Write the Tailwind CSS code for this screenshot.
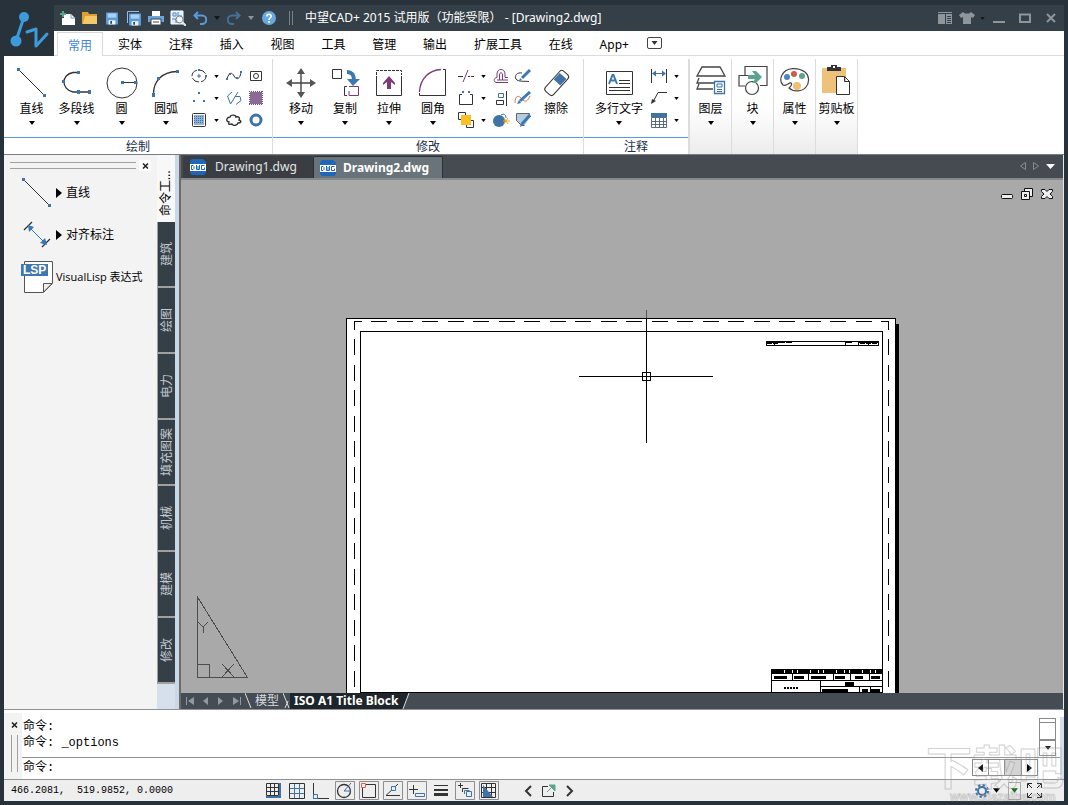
<!DOCTYPE html>
<html lang="zh-CN">
  <head>
    <meta charset="UTF-8" />
    <meta name="viewport" content="width=device-width, initial-scale=1.0" />
    <title>中望CAD+ 2015</title>
    <script src="https://cdn.jsdelivr.net/npm/@tailwindcss/browser@4"></script>
  </head>
  <body class="flex h-screen flex-col overflow-hidden bg-[#28323a] px-1 pt-[5px] pb-1 font-['Noto_Sans','Noto_Sans_CJK_SC',sans-serif] text-xs leading-4 text-black">
    <svg class="hidden">
      <symbol id="down" viewBox="0 0 6 4"><path d="M0 0h6L3 4z" fill="currentColor" /></symbol>
      <symbol id="disk" viewBox="0 0 14 14">
        <path d="M0 0h14v14H0z" fill="#5a9bd8" />
        <path d="M2 1h10v5H2z" fill="#a9d0f5" />
        <path d="M3 9h8v5H3z" fill="#e9f2fb" />
        <path d="M5 10h2v3H5z" fill="#35414b" />
      </symbol>
      <symbol id="dwg" viewBox="0 0 16 16">
        <path d="M2 0h11l3 3v11l-2 2H2l-2-2V2z" fill="#1f66b8" />
        <path d="M0 5h16v7H0z" fill="#fff" />
        <path d="M1.500 6.500v4H3l1-1v-2l-1-1zM6.500 6v4.500h3V6M8 7v3M14.500 6.500h-3v4h3v-2" fill="none" stroke="#1f66b8" />
      </symbol>
      <symbol id="line" viewBox="0 0 32 32">
        <path d="M3 3l26 26" stroke="#333" />
        <path d="M1 1h3v3H1zM27 27h3v3h-3z" fill="#3f73a7" />
      </symbol>
    </svg>

    <!-- title bar and menu -->
    <header class="flex">
      <svg class="h-[50px] w-[50px] shrink-0" viewBox="0 0 50 50" fill="none" stroke="#3d9bdc">
        <path d="M20 12l-8 24" stroke-width="3" />
        <circle cx="20" cy="12" r="5" fill="#3d9bdc" stroke="none" />
        <circle cx="12" cy="36" r="5.500" fill="#3d9bdc" stroke="none" />
        <path d="M23 27l9-3v17l11-12" stroke-width="3" stroke-linecap="round" stroke-linejoin="round" />
      </svg>
      <div class="flex min-w-0 grow flex-col">
        <div class="flex h-[26px] items-center bg-[#353f48] pl-[3px] text-white">
          <button aria-label="新建" class="flex w-[22px] justify-center">
            <svg width="16" height="16"><path d="M4 4h7l4 4v7H2V8h2z" fill="#fff" /><path d="M11 4v4h4" fill="none" stroke="#8a949c" /><path d="M3 1v6M0 4h6" stroke="#5aa58a" stroke-width="2" /></svg>
          </button>
          <button aria-label="打开" class="flex w-[22px] justify-center">
            <svg width="16" height="14"><path d="M0 1h6l1 2h8v10H0z" fill="#e0a02f" /><path d="M3 5h12v8H1z" fill="#f4c768" /></svg>
          </button>
          <button aria-label="保存" class="flex w-[22px] justify-center"><svg width="12" height="13"><use href="#disk" /></svg></button>
          <button aria-label="全部保存" class="flex w-[22px] justify-center">
            <svg width="14" height="15"><path d="M.500 12V.500H12" fill="none" stroke="#8fbfec" /><svg x="2" y="2" width="12" height="13"><use href="#disk" /></svg></svg>
          </button>
          <button aria-label="打印" class="flex w-[22px] justify-center">
            <svg width="16" height="14"><path d="M4 0h8v5H4z" fill="#fff" /><path d="M0 5h16v6H0z" fill="#69a5dc" /><path d="M3 8h10v6H3z" fill="#fff" stroke="#35414b" /><path d="M5 11h6" stroke="#35414b" /></svg>
          </button>
          <button aria-label="打印预览" class="flex w-[22px] justify-center">
            <svg width="16" height="16" fill="none"><path d="M1 1h12v13H1z" fill="#dfeefa" stroke="#fff" /><path d="M3 3h3v3H3zM8 2v4h4M2 9h4v4" stroke="#4b8ac4" /><circle cx="9.500" cy="9.500" r="3.500" fill="#eef4fa" stroke="#747d84" /><path d="M12 12l4 4" stroke="#e8e8e8" stroke-width="2" /></svg>
          </button>
          <button aria-label="放弃" class="flex w-[22px] justify-center">
            <svg width="14" height="14" fill="none" stroke="#5a9bd8" stroke-width="2"><path d="M5 1L1.500 4.500 5 8M2 4.500h7a4 4 0 0 1 0 8.500H7" /></svg>
          </button>
          <button aria-label="放弃列表" class="flex w-3 justify-center text-[#11181d]"><svg width="6" height="4"><use href="#down" /></svg></button>
          <button aria-label="重做" class="flex w-[22px] justify-center">
            <svg width="14" height="14" fill="none" stroke="#456f96" stroke-width="2"><path d="M9 1l3.500 3.500L9 8M12 4.500H5A4 4 0 0 0 5 13h2" /></svg>
          </button>
          <button aria-label="重做列表" class="flex w-3 justify-center text-[#8b9298]"><svg width="6" height="4"><use href="#down" /></svg></button>
          <button aria-label="帮助" class="flex w-6 justify-center">
            <svg width="14" height="14" fill="none"><circle cx="7" cy="7" r="7" fill="#6aa7e0" /><path d="M4.800 5.500C4.800 2.500 9.300 2.700 9.200 5.300 9.100 7 7 6.800 7 9M7 10v2" stroke="#fff" stroke-width="1.600" /></svg>
          </button>
          <span class="ml-2 h-3.5 w-1 border-x border-[#77818a]"></span>
          <h1 class="ml-3 whitespace-nowrap">中望CAD+ 2015 试用版（功能受限） - [Drawing2.dwg]</h1>
          <div class="ml-auto flex items-center text-[#8e959b]">
            <button aria-label="布局" class="flex w-[22px] justify-center">
              <svg width="14" height="12"><path d="M0 0h14v1H0zM0 2h7v10H0zM8 2h6v10H8z" fill="#8e959b" /><path d="M9 4.500h4M9 6.500h4M9 8.500h4M9 10.500h4" stroke="#353f48" /></svg>
            </button>
            <button aria-label="皮肤" class="flex w-[22px] justify-center">
              <svg width="16" height="12"><path d="M4 0l2 1.500h4L12 0l4 3-2 3-2-1v7H4V5L2 6 0 3z" fill="#8e959b" /></svg>
            </button>
            <button aria-label="皮肤列表" class="flex w-2 justify-center text-[#11181d]"><svg width="5" height="3"><use href="#down" /></svg></button>
            <button aria-label="最小化" class="flex w-[26px] justify-center"><svg width="12" height="12"><path d="M0 9h12v2H0z" fill="#8e959b" /></svg></button>
            <button aria-label="最大化" class="flex w-[26px] justify-center"><svg width="12" height="10" fill="none"><path d="M1 1.500h10V9H1z" stroke="#8e959b" stroke-width="2" /></svg></button>
            <button aria-label="关闭" class="flex w-[26px] justify-center"><svg width="10" height="10"><path d="M1 1l8 8M9 1L1 9" stroke="#8e959b" stroke-width="2" /></svg></button>
          </div>
        </div>
        <nav class="flex h-[25px] items-end border-b border-[#dcdcdc] bg-white pl-[3px]">
          <button class="-mb-px h-6 w-[46px] border border-b-0 border-[#d4d9de] bg-white pt-0.5 text-[#3d86d6]">常用</button>
          <div class="ml-[15px] flex h-6 w-[511px] items-center justify-between pt-1">
            <button>实体</button>
            <button>注释</button>
            <button>插入</button>
            <button>视图</button>
            <button>工具</button>
            <button>管理</button>
            <button>输出</button>
            <button>扩展工具</button>
            <button>在线</button>
            <button>App+</button>
          </div>
          <button aria-label="最小化功能区" class="mb-1.5 ml-[18px] flex h-3 w-[15px] items-center justify-center rounded-xs border border-[#444] text-[#333]"><svg width="7" height="4"><use href="#down" /></svg></button>
        </nav>
      </div>
    </header>

    <!-- ribbon -->
    <section class="flex h-[99px] shrink-0 border-b border-[#777c80] bg-white pt-[3px]">
      <div class="flex w-[269px] flex-col border-r border-[#dcdcdc]">
        <div class="flex h-20 border-b border-[#5a9bd0] pl-[5px]">
          <button class="flex w-[45px] flex-col items-center pt-2">
            <svg width="32" height="32"><use href="#line" /></svg>
            <span class="mt-0.5">直线</span>
            <svg class="mt-1" width="6" height="4"><use href="#down" /></svg>
          </button>
          <button class="flex w-[45px] flex-col items-center pt-2">
            <svg width="32" height="32"><path d="M17 5.500h-5c-12 2-12 17 0 19.500h16" fill="none" stroke="#333" stroke-width="1.300" /><path d="M16 4h3v3h-3zM1 13h3v3H1zM16 23h3v4h-3zM27 23h3v4h-3z" fill="#3f73a7" /></svg>
            <span class="mt-0.5">多段线</span>
            <svg class="mt-1" width="6" height="4"><use href="#down" /></svg>
          </button>
          <button class="flex w-[45px] flex-col items-center pt-2">
            <svg width="32" height="32"><circle cx="16" cy="16" r="15" fill="none" stroke="#333" /><path d="M16 15.500h15" stroke="#333" /><path d="M15 14h3v3h-3zM28 14h3v3h-3z" fill="#3f73a7" /></svg>
            <span class="mt-0.5">圆</span>
            <svg class="mt-1" width="6" height="4"><use href="#down" /></svg>
          </button>
          <button class="flex w-[44px] flex-col items-center pt-2">
            <svg width="32" height="32"><path d="M3.500 28C3 14 12 5 27 4.500" fill="none" stroke="#333" stroke-width="1.300" /><path d="M2 26h3v4H2zM7 10h3v3H7zM26 3h3v3h-3z" fill="#3f73a7" /></svg>
            <span class="mt-0.5">圆弧</span>
            <svg class="mt-1" width="6" height="4"><use href="#down" /></svg>
          </button>
          <div class="ml-px grid grid-cols-[20px_14px_22px_22px] grid-rows-[22px_22px_22px] content-start place-items-center pt-1.5">
            <button aria-label="椭圆"><svg width="16" height="14" fill="none"><ellipse cx="8" cy="7" rx="7" ry="6" stroke="#333" stroke-dasharray="8 2" /><path d="M6 7h4M8 5v4" stroke="#3f73a7" /><path d="M7 0h2v2H7zM14 6h2v2h-2z" fill="#3f73a7" /></svg></button>
            <button aria-label="椭圆列表"><svg width="5" height="3"><use href="#down" /></svg></button>
            <button aria-label="样条曲线"><svg width="16" height="12" fill="none"><path d="M1 9c2-7 5-7 7-3s6 4 7-4" stroke="#333" /><path d="M0 8h2v2H0zM3 3h2v2H3zM10 7h2v2h-2zM14 1h2v2h-2z" fill="#3f73a7" /></svg></button>
            <button aria-label="区域"><svg width="14" height="12" fill="none" stroke="#333"><path d="M1.500 1.500h11v9h-11z" /><circle cx="7" cy="6" r="2.500" /></svg></button>
            <button aria-label="点"><svg width="14" height="12"><path d="M6 0h2v2H6zM1 8h2v2H1zM11 8h2v2h-2z" fill="#3f73a7" /></svg></button>
            <button aria-label="点列表"><svg width="5" height="3"><use href="#down" /></svg></button>
            <button aria-label="三维多段线"><svg width="16" height="14" fill="none" stroke="#3f73a7"><path d="M6 1L1.500 5l3 8 7.500-12M9 5.500l5 0 1 4-5 4" /></svg></button>
            <button aria-label="面域"><svg width="14" height="14"><path d="M1 1h12v12H1z" fill="#8d6a96" /><path d="M0 .5h14M0 13.500h14M.500 0v14M13.500 0v14" stroke="#6f4b79" stroke-dasharray="1 1" /></svg></button>
            <button aria-label="图案填充"><svg width="14" height="14"><rect x=".5" y=".5" width="13" height="13" rx="1" fill="#fff" stroke="#333" /><path d="M2 2h10v10H2z" fill="#8fb2d4" /><path d="M2 3.500h10M2 5.500h10M2 7.500h10M2 9.500h10" stroke="#3f73a7" stroke-dasharray="1 1" /></svg></button>
            <button aria-label="填充列表"><svg width="5" height="3"><use href="#down" /></svg></button>
            <button aria-label="修订云线"><svg width="16" height="12" fill="none" stroke="#333" stroke-width="1.400"><path d="M4 3c1-3 6-2 6 0 3-1 4 1 3 3 3 1 2 3-1 3-1 3-5 3-6 1-3 1-4 0-3-2-4-1-2-5 1-5z" /></svg></button>
            <button aria-label="圆环"><svg width="14" height="14"><circle cx="7" cy="7" r="5" fill="none" stroke="#3f73a7" stroke-width="3" /></svg></button>
          </div>
        </div>
        <p class="pt-0.5 text-center leading-[14px] text-[#222d4a]">绘制</p>
      </div>

      <div class="flex w-[311px] flex-col border-r border-[#dcdcdc]">
        <div class="flex h-20 border-b border-[#5a9bd0] pl-1.5">
          <button class="flex w-11 flex-col items-center pt-2">
            <svg width="32" height="32"><path d="M16 4v24M4 16h24" stroke="#444" stroke-width="1.400" /><path d="M16 1l4 6h-8zM16 31l4-6h-8zM1 16l6-4v8zM31 16l-6-4v8z" fill="#555" /></svg>
            <span class="mt-0.5">移动</span>
            <svg class="mt-1" width="6" height="4"><use href="#down" /></svg>
          </button>
          <button class="flex w-11 flex-col items-center pt-2">
            <svg width="32" height="32" fill="none"><path d="M3.500 2.500h9v9h-9z" stroke="#333" /><path d="M18 5c6 0 7 4 7 9" stroke="#3f78b0" stroke-width="4" /><path d="M18 12h13l-7 7z" fill="#3f78b0" /><path d="M20 19.500h9.500v9h-9.500V24" stroke="#7a3a78" /><path d="M18 19.500h-2.500v9H18" stroke="#333" /></svg>
            <span class="mt-0.5">复制</span>
            <svg class="mt-1" width="6" height="4"><use href="#down" /></svg>
          </button>
          <button class="flex w-11 flex-col items-center pt-2">
            <svg width="32" height="32" fill="none"><path d="M3.500 9v19.500h25V9" stroke="#333" /><path d="M3.500 8V3.500h25V8" stroke="#333" stroke-dasharray="3 1" /><path d="M16 9l6 7v2l-4-3v7h-4v-7l-4 3v-2z" fill="#7a3a78" /></svg>
            <span class="mt-0.5">拉伸</span>
            <svg class="mt-1" width="6" height="4"><use href="#down" /></svg>
          </button>
          <button class="flex w-11 flex-col items-center pt-2">
            <svg width="32" height="32" fill="none"><path d="M2.500 25C3 12 12 3 24 2.500" stroke="#7a3a78" stroke-width="1.300" /><path d="M26 2.500h2.500v26h-26V26" stroke="#333" /></svg>
            <span class="mt-0.5">圆角</span>
            <svg class="mt-1" width="6" height="4"><use href="#down" /></svg>
          </button>
          <div class="ml-px grid grid-cols-[20px_14px_22px_22px] grid-rows-[22px_22px_22px] content-start place-items-center pt-1.5">
            <button aria-label="修剪"><svg width="16" height="14" fill="none"><path d="M0 7.500h5M10 7.500h2M13 7.500h3" stroke="#333" /><path d="M5 13l5-12" stroke="#7a3a78" /></svg></button>
            <button aria-label="修剪列表"><svg width="5" height="3"><use href="#down" /></svg></button>
            <button aria-label="偏移"><svg width="16" height="14" fill="none"><path d="M15 13.500H3c-3-1-2-5 1-5V5c0-6 8-6 8 0v3.500h3M15 11H4M6.500 11V6c0-3 3-3 3 0v5" stroke="#7a3a78" /></svg></button>
            <button aria-label="编辑多段线"><svg width="18" height="14" fill="none"><path d="M8 4C3 3 0 7 2 10s8 2 13 2.500" stroke="#333" /><path d="M8 9l8-8" stroke="#3f78b0" stroke-width="3" /><path d="M5 12l3-1-2-2z" fill="#3f78b0" /></svg></button>
            <button aria-label="打断"><svg width="16" height="14" fill="none"><path d="M4 3.500H1.500v10h13v-10H12" stroke="#333" /><path d="M4 0h2v2H4zM10 0h2v2h-2z" fill="#3f73a7" /></svg></button>
            <button aria-label="打断列表"><svg width="5" height="3"><use href="#down" /></svg></button>
            <button aria-label="对齐"><svg width="14" height="15" fill="none"><path d="M12.500 0v15M2.500 9.500h7v4h-7z" stroke="#333" /><path d="M4.500 2.500h5v4h-5z" stroke="#3f73a7" /></svg></button>
            <button aria-label="编辑样条曲线"><svg width="18" height="14" fill="none"><path d="M1 12c0-8 4-8 7-4s6 2 8-3" stroke="#e0704c" /><path d="M6 10l10-9" stroke="#3f78b0" stroke-width="3" /><path d="M3 13l4-1-2-3z" fill="#3f78b0" /></svg></button>
            <button aria-label="绘图次序"><svg width="16" height="16" fill="none"><path d="M.500.500h7v7h-7zM8.500 8.500h7v7h-7z" stroke="#333" /><path d="M3 3h10v10H3z" fill="#fbbf24" /></svg></button>
            <button aria-label="次序列表"><svg width="5" height="3"><use href="#down" /></svg></button>
            <button aria-label="分解"><svg width="18" height="14" fill="none"><circle cx="7" cy="8" r="6" fill="#3f73a7" /><path d="M9 2c3-2 5 0 5 3" stroke="#3f73a7" /><path d="M12 5l4 6M16 5l-4 6M11 8h7" stroke="#f5a623" /></svg></button>
            <button aria-label="编辑填充"><svg width="16" height="16" fill="none"><path d="M14.500 6v-4.500h-13v7l5 5h3" fill="#b5cbe0" stroke="#666" /><path d="M7 12l8-9" stroke="#3f78b0" stroke-width="3" /><path d="M5 15l4-2-3-2z" fill="#3f78b0" /></svg></button>
          </div>
          <button class="flex w-11 flex-col items-center pt-2">
            <svg width="32" height="32"><g transform="rotate(42 16 16)"><rect x="11" y="2" width="11" height="27" rx="3" fill="#fff" stroke="#333" /><path d="M12 6h9v9h-9z" fill="#3f73a7" /></g></svg>
            <span class="mt-0.5">擦除</span>
          </button>
        </div>
        <p class="pt-0.5 text-center leading-[14px] text-[#222d4a]">修改</p>
      </div>

      <div class="flex w-[104px] flex-col">
        <div class="flex h-20 border-b border-[#5a9bd0] pl-[5px]">
          <button class="flex w-[60px] flex-col items-center pt-2">
            <svg width="32" height="32" fill="none"><path d="M3.500 4.500h26v23h-26z" stroke="#333" /><path d="M6 17l3.500-9h1L14 17M7 13.500h6" stroke="#3f78b0" stroke-width="2" /><path d="M16 13.500h11M16 16.500h11M6 20.500h21M6 23.500h21" stroke="#333" /></svg>
            <span class="mt-0.5">多行文字</span>
            <svg class="mt-1" width="6" height="4"><use href="#down" /></svg>
          </button>
          <div class="grid grid-cols-[20px_14px] grid-rows-[22px_22px_22px] content-start place-items-center pt-1.5">
            <button aria-label="标注"><svg width="16" height="14" fill="none"><path d="M.500 0v14M15.500 0v14" stroke="#333" /><path d="M3 4.500h10" stroke="#3f73a7" /><path d="M1 4.500l4-3v6zM15 4.500l-4-3v6z" fill="#3f73a7" /></svg></button>
            <button aria-label="标注列表"><svg width="5" height="3"><use href="#down" /></svg></button>
            <button aria-label="引线"><svg width="16" height="14" fill="none"><path d="M16 1.500H7L2 11" stroke="#333" /><path d="M0 13l1-5 4 2z" fill="#333" /></svg></button>
            <button aria-label="引线列表"><svg width="5" height="3"><use href="#down" /></svg></button>
            <button aria-label="表格"><svg width="16" height="15" fill="none"><path d="M.500 4.500h15v10H.500zM0 8.500h16M0 11.500h16M4.500 4v10M8.500 4v10M12.500 4v10" stroke="#5a6b7b" /><path d="M0 0h16v4H0z" fill="#3f73a7" /></svg></button>
            <button aria-label="表格列表"><svg width="5" height="3"><use href="#down" /></svg></button>
          </div>
        </div>
        <p class="pt-0.5 text-center leading-[14px] text-[#222d4a]">注释</p>
      </div>

      <div class="flex border-x border-[#dcdcdc] bg-linear-to-b from-white via-white to-[#ececec]">
        <button class="flex w-[42px] flex-col items-center border-l border-[#dcdcdc] pt-[5px]">
          <svg width="32" height="32" fill="none" stroke="#444" stroke-width="1.300"><path d="M7 3h18l5 9H2zM4 14l-2 5h20M4 20l-2 5h16" /><path d="M19.500 17.500h10v12h-10z" fill="#fff" stroke="#3f73a7" /><path d="M22 20h5v3h-5zM22 25.500h5M22 27.500h5" stroke="#3f73a7" stroke-width="1" /></svg>
          <span class="mt-[5px]">图层</span>
          <svg class="mt-1" width="6" height="4"><use href="#down" /></svg>
        </button>
        <button class="flex w-[42px] flex-col items-center border-l border-[#dcdcdc] pt-[5px]">
          <svg width="32" height="32" fill="none" stroke="#444" stroke-width="1.200"><path d="M8 11V2.500h22v19h-7M8 22H2V11.500h13" /><circle cx="15" cy="24" r="6.500" fill="#fff" /><path d="M11 11h7l-3-4h4l6 6-6 6h-4l3-4h-7z" fill="#5aa58a" stroke="none" /></svg>
          <span class="mt-[5px]">块</span>
          <svg class="mt-1" width="6" height="4"><use href="#down" /></svg>
        </button>
        <button class="flex w-[42px] flex-col items-center border-l border-[#dcdcdc] pt-[5px]">
          <svg width="32" height="32"><path d="M9 20c4-3 5 1 1 4 4 4 13 4 17-1 4-5 3-12-1-15C19 3 7 3 3 11c-2 4-1 8 1 10 2 1 3 0 5-1z" fill="#fff" stroke="#444" stroke-width="1.200" /><circle cx="8" cy="13" r="3" fill="#4a86c4" /><circle cx="15" cy="10" r="3" fill="#cf5a45" /><circle cx="23" cy="12" r="3" fill="#5aa58a" /><circle cx="18" cy="22" r="4" fill="#f0c070" /></svg>
          <span class="mt-[5px]">属性</span>
          <svg class="mt-1" width="6" height="4"><use href="#down" /></svg>
        </button>
        <button class="flex w-[42px] flex-col items-center border-l border-[#dcdcdc] pt-[5px]">
          <svg width="32" height="32"><path d="M1 4h24v25H1z" fill="#eec27a" /><path d="M6 7V3h4V1h6v2h4v4z" fill="#333" /><path d="M12 2h2v2h-2z" fill="#fff" /><path d="M15.500 12.500h8l5 5v13h-13zM23.500 12.500v5h5" fill="#fff" stroke="#333" /></svg>
          <span class="mt-[5px]">剪贴板</span>
          <svg class="mt-1" width="6" height="4"><use href="#down" /></svg>
        </button>
      </div>
    </section>

    <main class="flex min-h-0 grow">
      <!-- tool palette -->
      <aside class="flex w-[153px] shrink-0 flex-col bg-[#f3f3f3]">
        <div class="flex h-[17px] items-center pt-1 pl-1.5">
          <span class="h-[7px] w-[126px] border-y border-[#a0a0a0]"></span>
          <button aria-label="关闭面板" class="ml-[3px] flex h-[11px] w-3 items-center justify-center bg-white"><svg width="7" height="6"><path d="M1 .5l5 5M6 .5l-5 5" stroke="#222" stroke-width="1.500" /></svg></button>
        </div>
        <button class="flex h-[42px] items-center pl-[17px]">
          <svg width="32" height="32"><use href="#line" /></svg>
          <svg class="ml-[3px]" width="6" height="10"><path d="M0 0l6 5-6 5z" /></svg>
          <span class="ml-1">直线</span>
        </button>
        <button class="flex h-[42px] items-center pl-[17px]">
          <svg width="32" height="32" fill="none"><path d="M3 11l8-8M21 28l8-8" stroke="#333" stroke-width="1.300" /><path d="M8 8l16 16" stroke="#3178bd" /><path d="M7 6l6 2-5 5zM26 26l-7-2 5-5z" fill="#3178bd" /></svg>
          <svg class="ml-[3px]" width="6" height="10"><path d="M0 0l6 5-6 5z" /></svg>
          <span class="ml-1">对齐标注</span>
        </button>
        <button class="flex h-[42px] items-center pl-[17px]">
          <svg width="32" height="34"><path d="M3.500 1.500h28v22l-9 9h-19z" fill="#fff" stroke="#555" /><path d="M31 23.500h-8.500V32z" fill="#eee" stroke="#555" /><path d="M0 4h27v12H0z" fill="#3f78b0" /><text x="2" y="14" class="fill-white font-['Liberation_Sans'] text-[12px] font-bold">LSP</text></svg>
          <span class="ml-[3px] whitespace-nowrap font-['Open_Sans','Noto_Sans_CJK_SC',sans-serif] text-[11px]">VisualLisp 表达式</span>
        </button>
      </aside>
      <div class="flex w-[22px] shrink-0 flex-col border-r-4 border-[#c9d7e6] bg-[#d5e0ec] text-xs leading-[18px] text-[#c3c8cc]">
        <button class="flex h-[67px] rotate-180 items-center justify-start bg-[#f8f8f8] pt-1.5 text-black [text-orientation:sideways] [writing-mode:vertical-rl]">命令工...</button>
        <button class="flex h-[66px] rotate-180 items-center justify-center border-t-2 border-r border-[#a0a0a0] bg-[#353f48] [text-orientation:sideways] [writing-mode:vertical-rl]">建筑</button>
        <button class="flex h-[66px] rotate-180 items-center justify-center border-t-2 border-r border-[#a0a0a0] bg-[#353f48] [text-orientation:sideways] [writing-mode:vertical-rl]">绘图</button>
        <button class="flex h-[66px] rotate-180 items-center justify-center border-t-2 border-r border-[#a0a0a0] bg-[#353f48] [text-orientation:sideways] [writing-mode:vertical-rl]">电力</button>
        <button class="flex h-[66px] rotate-180 items-center justify-center border-t-2 border-r border-[#a0a0a0] bg-[#353f48] [text-orientation:sideways] [writing-mode:vertical-rl]">填充图案</button>
        <button class="flex h-[66px] rotate-180 items-center justify-center border-t-2 border-r border-[#a0a0a0] bg-[#353f48] [text-orientation:sideways] [writing-mode:vertical-rl]">机械</button>
        <button class="flex h-[66px] rotate-180 items-center justify-center border-t-2 border-r border-[#a0a0a0] bg-[#353f48] [text-orientation:sideways] [writing-mode:vertical-rl]">建模</button>
        <button class="flex h-[66px] rotate-180 items-center justify-center border-t-2 border-r border-[#a0a0a0] bg-[#353f48] [text-orientation:sideways] [writing-mode:vertical-rl]">修改</button>
      </div>

      <!-- drawing area -->
      <div class="flex min-w-0 grow flex-col border-r border-l-2 border-r-[#e8e8e8] border-l-[#6b6b6b] bg-[#454b51]">
        <div class="flex h-[25px] items-end border-b-2 border-[#85898c] text-[#e3e6e8]">
          <button class="ml-0.5 flex h-[22px] w-[130px] items-center rounded-t-xs bg-[#3a3e43] pl-[7px]">
            <svg width="16" height="16"><use href="#dwg" /></svg><span class="ml-[9px]">Drawing1.dwg</span>
          </button>
          <button class="flex h-[22px] w-[130px] items-center rounded-t-xs border border-b-0 border-[#2c3034] bg-[#68737a] pl-1.5 font-bold text-white">
            <svg width="16" height="16"><use href="#dwg" /></svg><span class="ml-[7px]">Drawing2.dwg</span>
          </button>
          <div class="mr-2 mb-2 ml-auto flex items-center gap-[7px]">
            <button aria-label="上一个"><svg width="6" height="8"><path d="M5.500.500v7L.500 4z" fill="none" stroke="#858b90" /></svg></button>
            <button aria-label="下一个"><svg width="6" height="8"><path d="M.500.500v7l5-3.500z" fill="none" stroke="#858b90" /></svg></button>
            <button aria-label="图纸列表" class="text-white"><svg width="9" height="5" viewBox="0 0 9 5"><path d="M0 0h9L4.500 5z" fill="currentColor" /></svg></button>
          </div>
        </div>
        <div class="relative min-h-0 grow overflow-hidden bg-[#a9a9a9]">
          <svg class="absolute inset-0 h-full w-full" fill="none" stroke="#000" shape-rendering="crispEdges">
            <!-- sheet, printable margin, frame -->
            <path d="M715 144h3v380h-3z" fill="#000" stroke="none" />
            <path d="M165.500 520V138.500h549V520" fill="#fff" />
            <path d="M173 141.500h535" stroke-dasharray="16 9.500" stroke-dashoffset="8.500" />
            <path d="M173.500 141v380M707.500 141v380" stroke-dasharray="16 9.500" stroke-dashoffset="7.500" />
            <path d="M179.500 151.500h522v361h-522z" />
            <!-- revision table -->
            <path d="M585.500 161.500h112v4h-112z" />
            <path d="M586 162.500h18M605 162.500h6M664 162.500h7M677 162.500h20M593.500 162v4M664.500 162v4M677.500 162v4M687.500 162v4" />
            <path d="M586 163.500h11M679 163.500h18" stroke-dasharray="5 1" />
            <!-- title block -->
            <path d="M590.500 512.500v-23h111M590 493.500h111M590 500.500h111M639.500 501v12M639 506.500h62M611.500 493v7M627.500 493v7M652.500 493v7M669.500 493v7M688.500 493v7M678.500 506v7M689.500 506v7" />
            <path d="M591 491.500h110" stroke-width="3" stroke-dasharray="12 1 7 1 4 1" />
            <path d="M593 497.500h13M613 497.500h10M630 497.500h15M654 497.500h10M674 497.500h8M690 497.500h9" stroke-width="3" />
            <path d="M664 504h9M681 511h6M690 511h9" stroke-width="4" />
            <path d="M641 510.500h26" stroke-width="3" />
            <path d="M603 508h14" stroke-width="2" stroke-dasharray="2 1" />
            <!-- cursor -->
            <path d="M465.500 138v125M398 196.500h134M461.500 192.500h8v8h-8z" />
            <path d="M465.500 130v8" stroke="#555" />
            <!-- UCS icon -->
            <g stroke="#4d4d4d">
              <path d="M16.500 417v80.500h50z" />
              <path d="M16.500 484.500h12v13h-12zM17 442l5 5 5-5M22.500 447v6M41 484l12 13M53 484l-12 13" />
            </g>
          </svg>
          <div class="absolute top-2 right-2.5 flex gap-2">
            <button aria-label="最小化图纸"><svg width="12" height="13"><rect x=".5" y="6.500" width="11" height="4" rx="1" fill="#eee" stroke="#111" /></svg></button>
            <button aria-label="还原图纸"><svg width="12" height="13" fill="#eee" stroke="#111"><path d="M3.500.500h8v8h-8z" /><path d="M.500 3.500h8v8h-8zM3.500 6.500h2v2h-2z" /></svg></button>
            <button aria-label="关闭图纸"><svg width="12" height="13" fill="#eee" stroke="#111"><path d="M.500 1.500h3.500l2 2 2-2h3.500v2L9 6l2.500 2.500v2H8l-2-2-2 2H.500v-2L3 6 .500 3.500z" /></svg></button>
          </div>
        </div>
        <div class="flex h-4 shrink-0 items-center bg-[#454c54] text-[#d8dcdf]">
          <div class="flex items-center gap-[7px] pl-[5px]">
            <button aria-label="首个布局"><svg width="9" height="8" fill="#929aa1"><path d="M0 0h1v8H0zM8 0v8L2 4z" /></svg></button>
            <button aria-label="前一布局"><svg width="8" height="8" fill="#929aa1"><path d="M6 0v8L1 4z" /></svg></button>
            <button aria-label="后一布局"><svg width="8" height="8" fill="#929aa1"><path d="M1 0v8l5-4z" /></svg></button>
            <button aria-label="末个布局"><svg width="9" height="8" fill="#929aa1"><path d="M8 0h1v8H8zM1 0v8l6-4z" /></svg></button>
          </div>
          <svg class="ml-1" width="7" height="16"><path d="M0 0l6 15" stroke="#ddd" /></svg>
          <button class="pr-1 pl-[3px]">模型</button>
          <svg width="7" height="16"><path d="M0 0l6 15M2 15L5 8" stroke="#ddd" /></svg>
          <button class="h-4 bg-[#1e252b] px-1 font-bold text-white">ISO A1 Title Block</button>
          <svg width="8" height="16"><path d="M0 0h7L1 16H0z" fill="#1e252b" /><path d="M7 0L1 16" stroke="#ddd" /></svg>
        </div>
      </div>
    </main>

    <!-- command line -->
    <section class="relative flex h-[71px] shrink-0 border-y border-[#8e9292] bg-white pt-[3px] font-['Liberation_Mono','Noto_Sans_CJK_SC',monospace]">
      <div class="flex w-[18px] shrink-0 flex-col items-center bg-[#f3f3f3] pl-0.5">
        <button aria-label="关闭命令行" class="mt-1.5 flex h-3 items-center"><svg width="7" height="6"><path d="M1 .5l5 5M6 .5l-5 5" stroke="#222" stroke-width="1.500" /></svg></button>
        <span class="mt-1 h-[37px] w-[7px] border-x border-[#a0a0a0]"></span>
      </div>
      <div class="flex min-w-0 grow flex-col">
        <div class="flex h-[45px] shrink-0 border-b border-[#8e9292]">
          <div class="grow pt-1.5 pl-px"><p>命令:</p><p>命令: _options</p></div>
          <div class="mt-[5px] mr-1 flex h-[38px] w-[17px] flex-col border border-[#8a8a8a]">
            <span class="h-1 border-b border-[#8a8a8a]"></span>
            <button aria-label="向下滚动" class="mt-auto flex h-4 items-center justify-center border-t-2 border-[#8a8a8a] text-[#222]"><svg width="8" height="4"><use href="#down" /></svg></button>
          </div>
        </div>
        <div class="flex h-[19px] items-center pr-[22px] pl-px">
          <label for="cmd">命令:</label>
          <input id="cmd" type="text" class="ml-2 min-w-0 grow outline-none" />
          <div class="flex h-[17px] w-[66px] border border-[#8a8a8a] bg-[#d4d4d4]">
            <button aria-label="向左滚动" class="flex w-4 items-center justify-center border-r border-[#8a8a8a] bg-white"><svg width="5" height="8"><path d="M5 0v8L0 4z" /></svg></button>
            <span class="w-4 border-r border-[#8a8a8a] bg-white"></span>
            <button aria-label="向右滚动" class="ml-auto flex w-4 items-center justify-center border-l border-[#8a8a8a] bg-white"><svg width="5" height="8"><path d="M0 0v8l5-4z" /></svg></button>
          </div>
        </div>
      </div>
      <span class="mt-1 w-1 self-stretch bg-[#d5dcea]"></span>
      <!-- watermark -->
      <div class="pointer-events-none absolute top-[31px] right-0 z-10 w-[138px] font-['Noto_Sans_CJK_SC',sans-serif] font-bold text-white/10">
        <p class="text-[46px] leading-[46px] [-webkit-text-stroke:1px_#8886]">下载吧</p>
        <p class="pt-1 pl-6 font-['Liberation_Sans'] text-xs leading-3 [-webkit-text-stroke:1px_#8885]">www.xiazaiba.com</p>
      </div>
    </section>

    <!-- status bar -->
    <footer class="flex h-[21px] shrink-0 items-center bg-[#eee]">
      <p class="w-[257px] pl-[7px] font-['Liberation_Mono',monospace] text-[10px] whitespace-pre">466.2081,  519.9852, 0.0000</p>
      <button aria-label="捕捉" class="flex w-6 justify-center"><svg width="15" height="15" fill="none"><path d="M.500.500h12v12H.500zM4.500 0v12M8.500 0v12M0 4.500h12M0 8.500h12" stroke="#333" /><path d="M13 0h2v15H0v-2h13z" fill="#3f73a7" /></svg></button>
      <button aria-label="栅格" class="flex w-6 justify-center"><svg width="16" height="16" fill="none"><path d="M5.500 0v16M10.500 0v16M0 5.500h16M0 10.500h16" stroke="#3f73a7" /><path d="M.500.500h15v15H.500z" stroke="#333" /></svg></button>
      <button aria-label="正交" class="flex w-6 justify-center"><svg width="16" height="16" fill="none"><path d="M.500 0v15.500H16" stroke="#333" /><path d="M.500 11.500h4v4h-4z" stroke="#3f73a7" /></svg></button>
      <button aria-label="极轴" class="flex w-6 justify-center"><svg width="20" height="19" fill="none"><path d="M.500.500h19v18H.500z" stroke="#8e8e8e" /><circle cx="9" cy="10" r="6.500" stroke="#333" stroke-width="1.300" /><path d="M9 10h7M9 10l7-8" stroke="#3f73a7" /></svg></button>
      <button aria-label="对象捕捉" class="flex w-6 justify-center"><svg width="20" height="19" fill="none"><path d="M.500.500h19v18H.500z" stroke="#8e8e8e" /><path d="M3.500 3.500h13v13h-13z" stroke="#333" /><path d="M2.500 2.500h4v4h-4z" fill="#eee" stroke="#d9644a" /></svg></button>
      <button aria-label="捕捉追踪" class="flex w-6 justify-center"><svg width="20" height="19" fill="none"><path d="M.500.500h19v18H.500z" stroke="#8e8e8e" /><path d="M17 14.500H3L15 3" stroke="#333" /><path d="M8.500 5.500h4v4h-4z" fill="#eee" stroke="#3f73a7" /></svg></button>
      <button aria-label="动态输入" class="flex w-6 justify-center"><svg width="20" height="19" fill="none"><path d="M.500.500h19v18H.500z" stroke="#8e8e8e" /><path d="M6.500 4v9M2 8.500h9" stroke="#333" /><path d="M8.500 12.500h9v3h-9z" stroke="#3f73a7" /></svg></button>
      <button aria-label="线宽" class="flex w-6 justify-center"><svg width="14" height="11"><path d="M0 0h14v1H0zM0 4h14v2H0zM0 8h14v3H0z" fill="#333" /></svg></button>
      <button aria-label="选择循环" class="flex w-6 justify-center"><svg width="20" height="19" fill="none"><path d="M.500.500h19v18H.500z" stroke="#8e8e8e" /><path d="M5.500 2v5M3 4.500h5M7.500 11V7.500h6" stroke="#333" /><path d="M9.500 13V9.500h5" stroke="#3f73a7" /><path d="M11.500 10.500h5v5h-5z" fill="#eee" stroke="#3f73a7" /></svg></button>
      <button aria-label="模型空间" class="flex w-6 justify-center"><svg width="20" height="19" fill="none"><path d="M.500.500h19v18H.500z" stroke="#8e8e8e" /><path d="M2.500 2.500h14v14h-14zM7.500 2v14M12.500 2v14M3 6.500h14M3 11.500h14" stroke="#333" /><path d="M4 4l10 12H4z" fill="#3f73a7" /></svg></button>
      <button aria-label="向左" class="ml-4 flex w-[21px] justify-center"><svg width="8" height="12" fill="none"><path d="M7 1L2 6l5 5" stroke="#333" stroke-width="2" /></svg></button>
      <button aria-label="弹出" class="flex w-[21px] justify-center"><svg width="14" height="14" fill="none"><path d="M6 2.500H.500v10h11V8" stroke="#333" /><path d="M5 8l5-5M7 1h6v6z" fill="#5aa58a" stroke="#5aa58a" /></svg></button>
      <button aria-label="向右" class="flex w-[21px] justify-center"><svg width="8" height="12" fill="none"><path d="M1 1l5 5-5 5" stroke="#333" stroke-width="2" /></svg></button>
      <div class="mr-[22px] ml-auto flex items-center">
        <button aria-label="设置"><svg width="14" height="14" fill="none" stroke="#3f73a7"><circle cx="7" cy="7" r="4" stroke-width="2" /><circle cx="7" cy="7" r="6" stroke-width="2" stroke-dasharray="2.400 2.300" /></svg></button>
        <button aria-label="设置列表" class="ml-1"><svg width="7" height="5"><use href="#down" /></svg></button>
        <button aria-label="注释可见性" class="ml-2 flex h-[18px] w-[13px] items-center justify-center border border-[#aaa] text-[#1f6b1f]"><svg width="7" height="5"><use href="#down" /></svg></button>
        <button aria-label="全屏" class="ml-1.5"><svg width="15" height="15" fill="none" stroke="#222"><path d="M5 .500H.500V5M10 .500h4.500V5M5 14.500H.500V10M10 14.500h4.500V10M1 1l4 4M14 1l-4 4M1 14l4-4M14 14l-4-4" /></svg></button>
      </div>
    </footer>
  </body>
</html>
